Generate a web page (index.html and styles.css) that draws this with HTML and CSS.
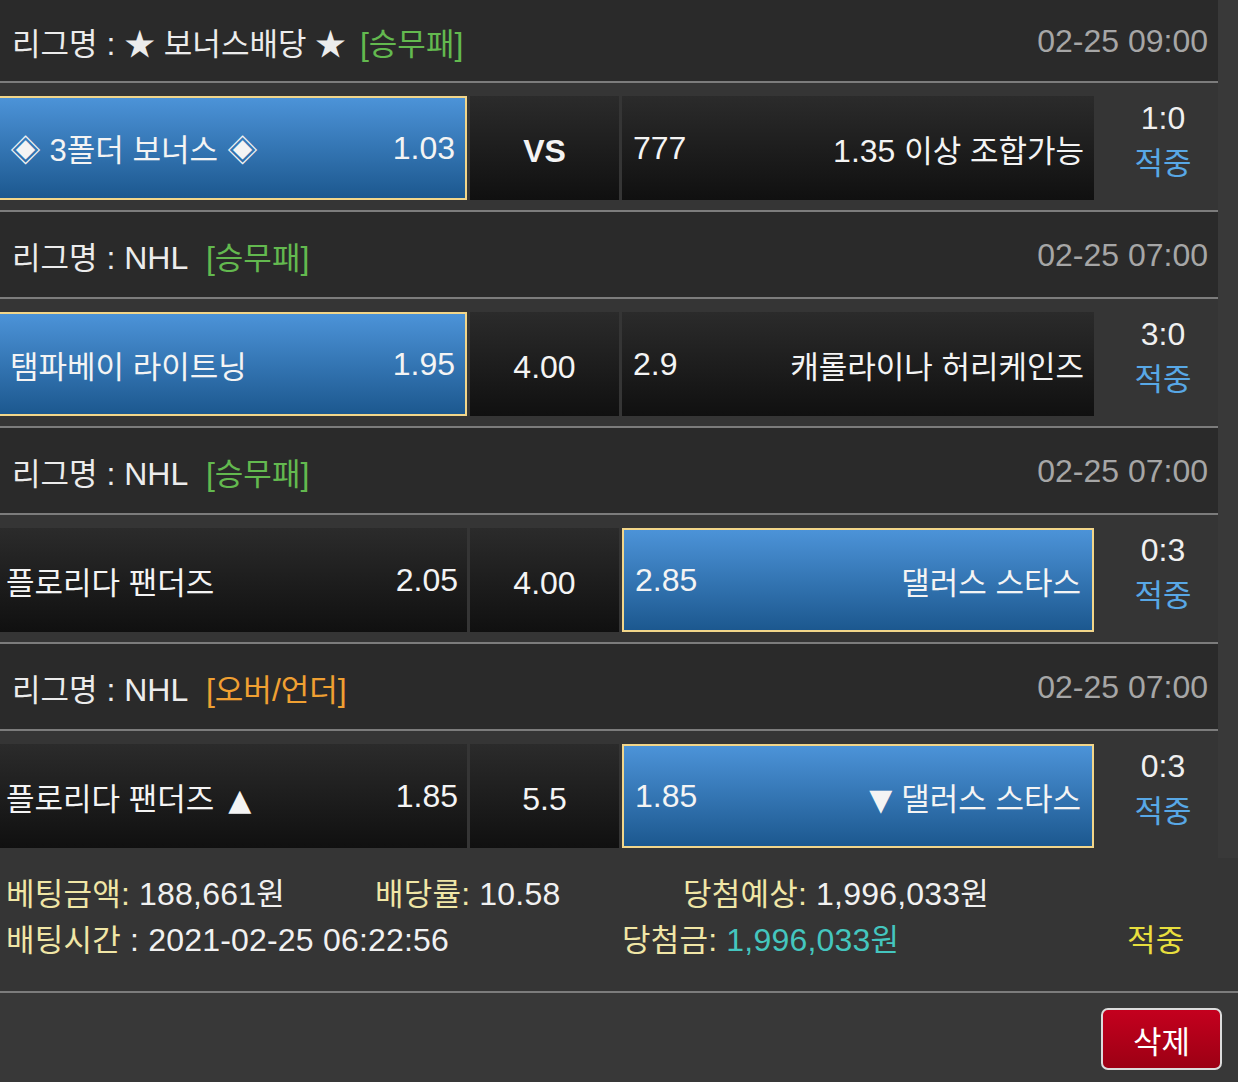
FILE: index.html
```html
<!DOCTYPE html>
<html lang="ko">
<head>
<meta charset="utf-8">
<title>베팅내역</title>
<link rel="stylesheet" href="styles.css">
</head>
<body>
<div class="page">
  <div class="list">
    <div class="league first">
      <div class="league-name"><span class="k">리그명</span> : <span class="k star">★ 보너스배당 ★</span> <span class="type win">[<span class="k">승무패</span>]</span></div>
      <div class="date">02-25 09:00</div>
    </div>
    <div class="match">
      <div class="cell home sel"><span class="k">◈ 3폴더 보너스 ◈</span><span>1.03</span></div>
      <div class="cell draw"><b>VS</b></div>
      <div class="cell away"><span>777</span><span>1.35 <span class="k">이상 조합가능</span></span></div>
      <div class="score"><span>1:0</span><span class="k hit">적중</span></div>
    </div>

    <div class="league">
      <div class="league-name"><span class="k">리그명</span> : NHL <span class="type win">[<span class="k">승무패</span>]</span></div>
      <div class="date">02-25 07:00</div>
    </div>
    <div class="match">
      <div class="cell home sel"><span class="k">탬파베이 라이트닝</span><span>1.95</span></div>
      <div class="cell draw">4.00</div>
      <div class="cell away"><span>2.9</span><span class="k">캐롤라이나 허리케인즈</span></div>
      <div class="score"><span>3:0</span><span class="k hit">적중</span></div>
    </div>

    <div class="league">
      <div class="league-name"><span class="k">리그명</span> : NHL <span class="type win">[<span class="k">승무패</span>]</span></div>
      <div class="date">02-25 07:00</div>
    </div>
    <div class="match">
      <div class="cell home"><span class="k">플로리다 팬더즈</span><span>2.05</span></div>
      <div class="cell draw">4.00</div>
      <div class="cell away sel"><span>2.85</span><span class="k">댈러스 스타스</span></div>
      <div class="score"><span>0:3</span><span class="k hit">적중</span></div>
    </div>

    <div class="league">
      <div class="league-name"><span class="k">리그명</span> : NHL <span class="type ou">[<span class="k">오버</span>/<span class="k">언더</span>]</span></div>
      <div class="date">02-25 07:00</div>
    </div>
    <div class="match last">
      <div class="cell home"><span><span class="k">플로리다 팬더즈</span> <span class="tri up">▲</span></span><span>1.85</span></div>
      <div class="cell draw">5.5</div>
      <div class="cell away sel"><span>1.85</span><span><span class="tri">▼</span> <span class="k">댈러스 스타스</span></span></div>
      <div class="score"><span>0:3</span><span class="k hit">적중</span></div>
    </div>
  </div>

  <div class="info">
    <div class="info-row">
      <span class="c1"><span class="lbl"><span class="k">베팅금액</span>:</span> 188,661<span class="k">원</span></span>
      <span class="c2"><span class="lbl"><span class="k">배당률</span>:</span> 10.58</span>
      <span class="c3"><span class="lbl"><span class="k">당첨예상</span>:</span> 1,996,033<span class="k">원</span></span>
    </div>
    <div class="info-row">
      <span class="d1"><span class="lbl k">배팅시간</span> : 2021-02-25 06:22:56</span>
      <span class="d2"><span class="lbl"><span class="k">당첨금</span>:</span> <span class="won">1,996,033<span class="k">원</span></span></span>
      <span class="d3 k result">적중</span>
    </div>
  </div>

  <div class="actions">
    <button class="btn-del"><span class="k">삭제</span></button>
  </div>
</div>
</body>
</html>
```

FILE: styles.css
```css
* {
  box-sizing: border-box;
}

html, body {
  margin: 0;
  padding: 0;
}

body {
  background: #393939;
  color: #f1f1f1;
  font-family: "Liberation Sans", "Noto Sans CJK KR", sans-serif;
  font-size: 32px;
  width: 1238px;
  height: 1082px;
  overflow: hidden;
}

.k {
  font-family: "Liberation Sans", "Noto Sans CJK KR", sans-serif;
  font-size: 31px;
}

.k.star {
  margin-right: -5px;
}

.tri {
  font-family: "DejaVu Sans", sans-serif;
  font-size: 30px;
}

.tri.up {
  margin-left: 5px;
}

.list {
  width: 1218px;
}

.league {
  height: 87px;
  background: #2a2a2a;
  border-bottom: 2px solid #7c7c7c;
  display: flex;
  align-items: center;
  justify-content: space-between;
  padding: 2px 10px 0 12px;
  white-space: nowrap;
}

.league.first {
  height: 83px;
}

.league-name {
  color: #ececec;
}

.type {
  margin-left: 10px;
}

.type.win {
  color: #63b94f;
}

.type.ou {
  color: #f0a032;
}

.date {
  color: #a6a6a6;
}

.match {
  height: 129px;
  background: #353535;
  border-bottom: 2px solid #7c7c7c;
  display: flex;
  align-items: flex-start;
  padding-top: 13px;
}

.match.last {
  border-bottom: none;
  height: 127px;
}

.cell {
  height: 104px;
  display: flex;
  align-items: center;
  justify-content: space-between;
  background: linear-gradient(#2b2b2b, #101010);
  white-space: nowrap;
  color: #f4f4f4;
}

.home {
  width: 467px;
  padding: 0 9px 0 6px;
}

.draw {
  width: 149px;
  margin-left: 3px;
  justify-content: center;
  padding-top: 6px;
}

.draw b {
  font-weight: bold;
}

.away {
  width: 472px;
  margin-left: 3px;
  padding: 0 10px 0 11px;
}

.cell.sel {
  background: linear-gradient(#4c93d8, #1c588f);
  border: 2px solid #f2d68a;
}

.home.sel {
  border-left: none;
  padding: 0 10px 0 10px;
}

.away.sel {
  padding: 0 11px 0 11px;
}

.score {
  flex: 1;
  height: 104px;
  display: flex;
  flex-direction: column;
  align-items: center;
  padding-left: 14px;
  line-height: 46px;
  color: #f0f0f0;
  margin-top: -1px;
}

.score .hit {
  color: #58a8e6;
}

.info {
  width: 1238px;
  background: #353535;
  padding: 10px 0 31px 6px;
  border-bottom: 2px solid #7c7c7c;
  letter-spacing: 0.2px;
}

.info-row {
  display: flex;
  height: 46px;
  align-items: center;
  white-space: nowrap;
}

.lbl {
  color: #f0e6a6;
}

.c1 { width: 369px; }
.c2 { width: 308px; }
.d1 { width: 616px; }
.d2 { width: 505px; }

.won {
  color: #44c6bf;
}

.result {
  color: #e8df3e;
}

.actions {
  display: flex;
  justify-content: flex-end;
  padding: 15px 16px 0 0;
  background: #383838;
  height: 100px;
}

.btn-del {
  width: 121px;
  height: 62px;
  border: 2px solid #dcdcdc;
  border-radius: 7px;
  background: linear-gradient(#c4001e, #9c0014);
  color: #ffffff;
  font-family: "Liberation Sans", "Noto Sans CJK KR", sans-serif;
  display: flex;
  align-items: center;
  justify-content: center;
  padding: 0;
}
```
